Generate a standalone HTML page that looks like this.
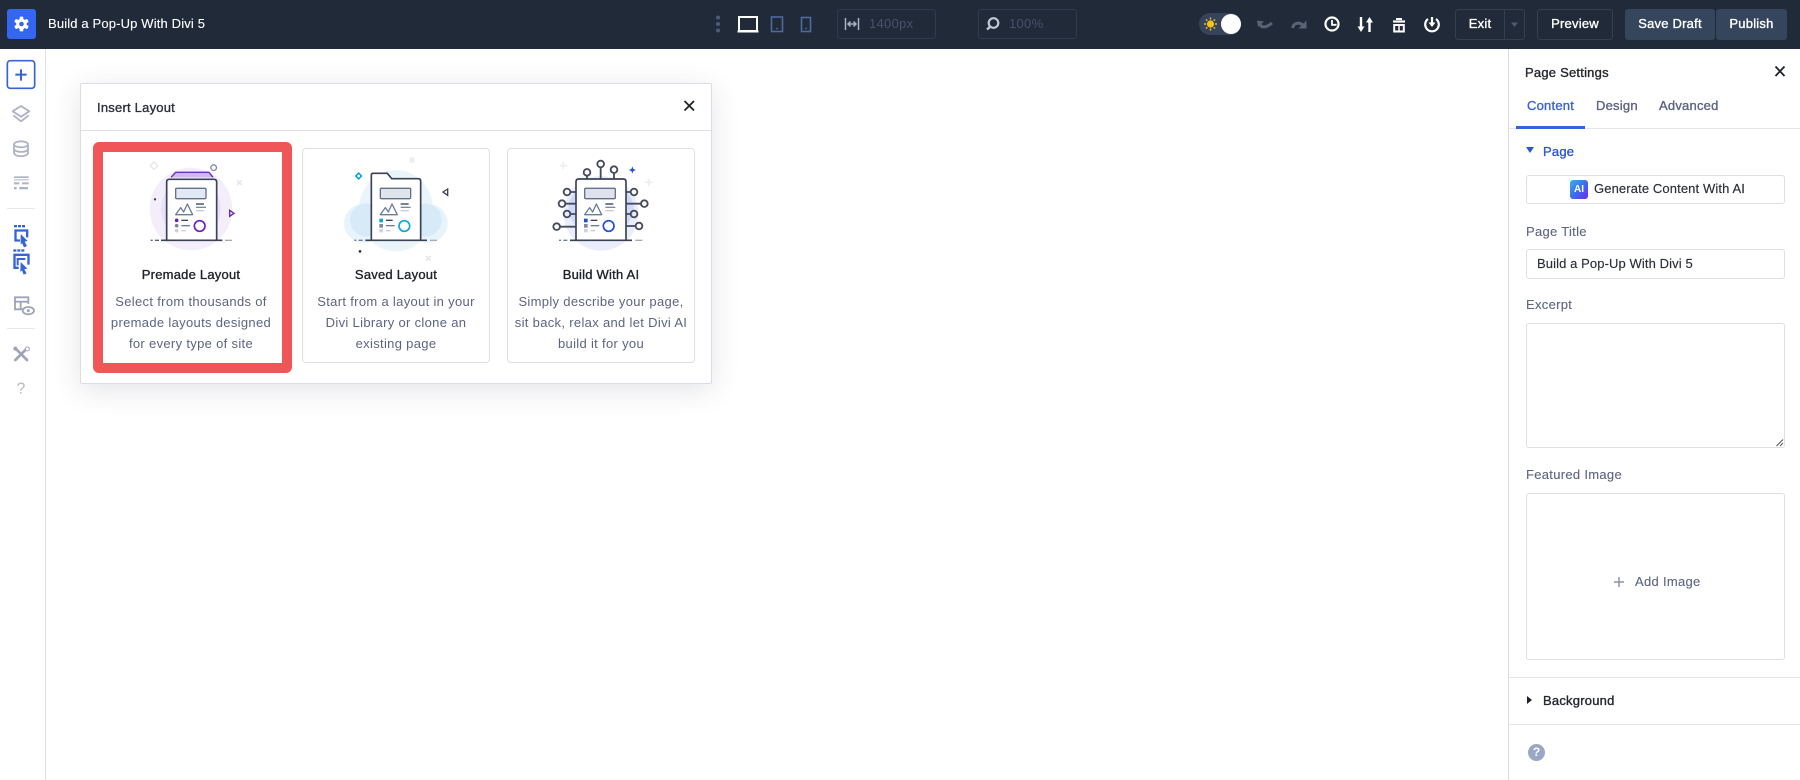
<!DOCTYPE html>
<html><head><meta charset="utf-8"><style>
*{box-sizing:border-box}
html,body{margin:0;padding:0;width:1800px;height:780px;overflow:hidden;background:#fff;font-family:"Liberation Sans",sans-serif}
.a{position:absolute}
.t{position:absolute;white-space:nowrap;line-height:20px;font-size:13px}
.c{transform:translateX(-50%);text-align:center}
svg{position:absolute;overflow:visible}
.m{-webkit-text-stroke:.35px currentColor;font-size:13px;letter-spacing:.22px}
.d{color:#5b6582;font-size:13px;letter-spacing:.32px}
.h{color:#20242c}
.box{position:absolute;border:1px solid #dcdfe4;border-radius:3px;background:#fff}
.l{color:#5b6582;font-size:13px;letter-spacing:.3px;-webkit-text-stroke:.12px currentColor}
.card{position:absolute;border:1.5px solid #dcdfe4;border-radius:4px;background:#fff}
</style></head><body>

<!-- top bar -->
<div class="a" style="left:0;top:0;width:1800px;height:49px;background:#212a38"></div>
<div class="a" style="left:7px;top:9px;width:29px;height:30px;background:#3566f1;border-radius:3px"></div>
<svg style="left:0;top:0" width="1800" height="49" viewBox="0 0 1800 49">
  <g transform="translate(21.5 24)" fill="#fff">
    <circle r="5.3"/><rect x="-1.8" y="-7.4" width="3.6" height="14.8" rx=".8"/>
    <rect x="-1.8" y="-7.4" width="3.6" height="14.8" rx=".8" transform="rotate(60)"/>
    <rect x="-1.8" y="-7.4" width="3.6" height="14.8" rx=".8" transform="rotate(120)"/>
    <circle r="2.3" fill="#3566f1"/>
  </g>
  <g fill="#4a5a80"><circle cx="718" cy="17.5" r="2"/><circle cx="718" cy="24" r="2"/><circle cx="718" cy="30.5" r="2"/></g>
  <rect x="739" y="17" width="18" height="14" fill="none" stroke="#fff" stroke-width="2"/><path d="M737.5 31.5H758.5" stroke="#fff" stroke-width="2"/>
  <rect x="771.5" y="17" width="11" height="14.5" fill="none" stroke="#4f6a9c" stroke-width="1.6"/><circle cx="777" cy="28.5" r=".9" fill="#4f6a9c"/>
  <rect x="801.5" y="17.5" width="9" height="14" fill="none" stroke="#4f6a9c" stroke-width="1.6"/><circle cx="806" cy="28.5" r=".9" fill="#4f6a9c"/>
  <rect x="837.5" y="9.5" width="98" height="29" rx="3" fill="none" stroke="#303b4e"/>
  <rect x="978.5" y="9.5" width="98" height="29" rx="3" fill="none" stroke="#303b4e"/>
  <path d="M845.5 18V30M858.5 18V30M848 24H856M850.5 21.5L848 24L850.5 26.5M853.5 21.5L856 24L853.5 26.5" fill="none" stroke="#aab3c6" stroke-width="1.5"/>
  <circle cx="993.5" cy="23" r="4.8" fill="none" stroke="#c2c9d6" stroke-width="2.2"/><path d="M989.8 27L987 29.5" stroke="#c2c9d6" stroke-width="2.4"/>
  <rect x="1199" y="13" width="42" height="22" rx="11" fill="#37435a"/>
  <circle cx="1231" cy="24" r="10" fill="#fff"/>
  <circle cx="1210.5" cy="24" r="3.6" fill="#f5c518"/>
  <g stroke="#f5c518" stroke-width="1.4"><path d="M1210.5 17.5V19.5M1210.5 28.5V30.5M1204 24H1206M1215 24H1217M1206 19.5L1207.3 20.8M1213.7 27.2L1215 28.5M1206 28.5L1207.3 27.2M1213.7 20.8L1215 19.5"/></g>
  <!-- undo / redo -->
  <path d="M1260 24C1261 28 1266 28 1272 23" fill="none" stroke="#596374" stroke-width="3"/><path d="M1257 20.5L1264 21.5L1258 27Z" fill="#596374"/>
  <path d="M1292.5 28C1294 22.5 1299 22 1303 25" fill="none" stroke="#596374" stroke-width="3"/><path d="M1306.5 20.5V28.5H1298.5Z" fill="#596374"/>
  <!-- clock -->
  <circle cx="1332" cy="24" r="6.5" fill="none" stroke="#fff" stroke-width="2.2"/><path d="M1332 20V24.8H1336.5" fill="none" stroke="#fff" stroke-width="1.8"/>
  <!-- sort -->
  <path d="M1361 17V28" stroke="#fff" stroke-width="2.4"/><path d="M1357.5 26.5H1364.5L1361 32Z" fill="#fff"/>
  <path d="M1369.5 22V32" stroke="#fff" stroke-width="2.4"/><path d="M1366 22.5H1373L1369.5 17Z" fill="#fff"/>
  <!-- trash -->
  <path d="M1393 21.5H1405" stroke="#fff" stroke-width="2.2"/><path d="M1396 19H1402" stroke="#fff" stroke-width="2"/><rect x="1394.2" y="25" width="9.6" height="6.5" fill="none" stroke="#fff" stroke-width="2"/><path d="M1399 25V31" stroke="#fff" stroke-width="1.5"/>
  <!-- power -->
  <path d="M1428 19A6.8 6.8 0 1 0 1436 19" fill="none" stroke="#fff" stroke-width="2.2"/><path d="M1432 17V23" stroke="#fff" stroke-width="2.2"/><path d="M1428.5 22.5H1435.5L1432 27Z" fill="#fff"/>
  <rect x="1455.5" y="9.5" width="69" height="30" rx="3" fill="none" stroke="#353f50"/><path d="M1504.5 9.5V39.5" stroke="#353f50"/>
  <path d="M1511 22.5H1518L1514.5 27Z" fill="#4e5a70"/>
  <rect x="1537.5" y="9.5" width="75" height="30" rx="3" fill="none" stroke="#353f50"/>
  <rect x="1625" y="9" width="90" height="31" rx="3" fill="#35465c"/>
  <rect x="1716" y="9" width="71" height="31" rx="3" fill="#35465c"/>
</svg>
<div class="t" style="left:48px;top:14px;color:#fff;font-size:13px;letter-spacing:.15px;-webkit-text-stroke:.12px #fff">Build a Pop-Up With Divi 5</div>
<div class="t" style="left:869px;top:14px;color:#46516f;font-size:13px;letter-spacing:.3px">1400px</div>
<div class="t" style="left:1009px;top:14px;color:#46516f;font-size:13px;letter-spacing:.3px">100%</div>
<div class="t c m" style="left:1480px;top:14px;color:#fff">Exit</div>
<div class="t c m" style="left:1575px;top:14px;color:#fff">Preview</div>
<div class="t c m" style="left:1670px;top:14px;color:#fff">Save Draft</div>
<div class="t c m" style="left:1751.5px;top:14px;color:#fff">Publish</div>

<!-- left sidebar -->
<div class="a" style="left:45px;top:49px;width:1px;height:731px;background:#dfe2e8"></div>
<svg style="left:0;top:50px" width="50" height="360" viewBox="0 0 150 1080">
  <rect x="22" y="32" width="82" height="83" rx="9" fill="#fff" stroke="#3563d9" stroke-width="5"/>
  <path d="M63 58V92M46 74H80" stroke="#3563d9" stroke-width="6"/>
  <g fill="none" stroke="#aeb4c7" stroke-width="5.5" stroke-linejoin="round">
    <path d="M63 168L88 184L63 200L38 184Z"/><path d="M40 196L63 214L86 196"/>
    <ellipse cx="63" cy="283" rx="21" ry="9"/><path d="M42 283V308C42 322 84 322 84 308V283M42 296C42 309 84 309 84 296"/>
  </g>
  <g fill="#aeb4c7"><rect x="42" y="379" width="44" height="5"/><rect x="42" y="388" width="44" height="3"/><rect x="42" y="397" width="16" height="6"/><rect x="66" y="397" width="20" height="6"/><rect x="42" y="411" width="8" height="7"/><rect x="58" y="411" width="26" height="7"/></g>
  <rect x="20" y="474" width="84" height="2" fill="#dcdfe5"/>
  <g fill="#3563d9">
    <rect x="42" y="525" width="9" height="7"/><rect x="54" y="525" width="9" height="7"/><rect x="66" y="525" width="9" height="7"/>
    <path d="M43 538H85V562H78V545H50V568H60V575H43Z"/><path d="M62 552L83 573L74 575L81 588L72 592L66 579L62 584Z"/>
    <rect x="40" y="598" width="9" height="7"/><rect x="52" y="598" width="9" height="7"/><rect x="64" y="598" width="9" height="7"/>
    <path d="M40 611H89V644H82V618H47V650H56V657H40Z"/><path d="M50 624H76V630H56V646H50Z"/><path d="M62 636L82 656L73 658L80 670L71 674L66 661L61 666Z"/>
  </g>
  <g fill="none" stroke="#9ea5b8" stroke-width="5.5">
    <path d="M70 778H45V742H85V762M45 755H85M62 755V778"/>
    <ellipse cx="85" cy="782" rx="17" ry="11"/>
  </g><circle cx="85" cy="782" r="4.5" fill="#9ea5b8"/>
  <rect x="20" y="834" width="84" height="2" fill="#dcdfe5"/>
  <g stroke="#9ea5b8" stroke-width="8" stroke-linecap="round" fill="none"><path d="M46 895L81 930"/><path d="M80 896L46 930"/></g>
  <circle cx="46" cy="896" r="6" fill="#9ea5b8"/><circle cx="82" cy="897" r="6" fill="#fff" stroke="#9ea5b8" stroke-width="3"/>
  <text x="63" y="1031" text-anchor="middle" font-size="46" fill="#b3b8c6" font-family="Liberation Sans">?</text>
</svg>

<!-- modal -->
<div class="a" style="left:80px;top:83px;width:632px;height:301px;background:#fff;border:1px solid #dadde3;border-radius:2px;box-shadow:0 6px 28px rgba(40,50,70,.13)"></div>
<div class="a" style="left:81px;top:130px;width:630px;height:1px;background:#dfe2e7"></div>
<div class="t m" style="left:97px;top:98px;color:#2a2e38">Insert Layout</div>
<svg style="left:0;top:0" width="720" height="130" viewBox="0 0 720 130"><path d="M684.5 101L694 110.5M694 101L684.5 110.5" stroke="#1e222a" stroke-width="1.8"/></svg>

<!-- card 1 -->
<div class="a" style="left:93px;top:142px;width:199px;height:231px;background:#fff;border:10px solid #f05558;border-radius:6px"></div>
<svg style="left:85px;top:130px" width="220" height="250" viewBox="0 0 660 750">
  <circle cx="318" cy="237" r="124" fill="#f4eefb"/><circle cx="318" cy="237" r="90" fill="#e9e1f8"/>
  <path d="M258 142L272 127H372L384 142" fill="#cdb9ef" stroke="#6a2fbd" stroke-width="4"/>
  <path d="M245 330V156Q245 148 253 148H387Q395 148 395 156V330" fill="#fff" stroke="#3b4256" stroke-width="5"/>
  <rect x="272" y="175" width="91" height="31" rx="3" fill="#e1e9f5" stroke="#64718c" stroke-width="4"/>
  <path d="M272 254L287 233L296 246L307 222L323 254Z" fill="none" stroke="#6b7d99" stroke-width="4" stroke-linejoin="round"/>
  <path d="M333 222H357" stroke="#3b4256" stroke-width="4"/><path d="M333 232H363" stroke="#7a8aa5" stroke-width="4"/><path d="M333 242H358" stroke="#c5ccd8" stroke-width="4"/>
  <circle cx="275" cy="271" r="5.5" fill="#6a24b8"/><circle cx="275" cy="287" r="5.5" fill="#7f7f9e"/><circle cx="275" cy="302" r="5.5" fill="#cfcfd8"/>
  <path d="M289 271H309" stroke="#3b4256" stroke-width="4"/><path d="M289 287H315" stroke="#6b7d99" stroke-width="4"/><path d="M289 302H302" stroke="#c5ccd8" stroke-width="4"/>
  <circle cx="344" cy="288" r="16" fill="#fff" stroke="#6a24b8" stroke-width="5"/>
  <path d="M228 331H412" stroke="#3b4256" stroke-width="5"/><path d="M197 331H203M210 331H222" stroke="#5a6278" stroke-width="4"/><path d="M420 331H441" stroke="#a3a9b5" stroke-width="4"/>
  <path d="M207 96L218 107L207 118L196 107Z" fill="none" stroke="#e6e7ee" stroke-width="4"/>
  <circle cx="386" cy="113" r="8.5" fill="none" stroke="#7d8cab" stroke-width="4"/>
  <path d="M456 151L470 165M470 151L456 165" stroke="#e6e7ee" stroke-width="5"/>
  <circle cx="210" cy="208" r="3.5" fill="#3b4256"/>
  <path d="M434 241L447 250L434 259Z" fill="none" stroke="#6a24b8" stroke-width="4"/>
</svg>
<div class="t c h m" style="left:191px;top:265px">Premade Layout</div>
<div class="t c d" style="left:191px;top:292px">Select from thousands of</div>
<div class="t c d" style="left:191px;top:313px">premade layouts designed</div>
<div class="t c d" style="left:191px;top:334px">for every type of site</div>

<!-- card 2 -->
<div class="card" style="left:302px;top:148px;width:188px;height:215px"></div>
<svg style="left:300px;top:140px" width="200" height="240" viewBox="0 0 600 720">
  <ellipse cx="288" cy="212" rx="112" ry="122" fill="#eaf5fb"/><circle cx="190" cy="250" r="58" fill="#e8f4fb"/><circle cx="385" cy="250" r="58" fill="#e8f4fb"/>
  <ellipse cx="200" cy="240" rx="50" ry="50" fill="#d6eaf7"/><ellipse cx="375" cy="240" rx="50" ry="50" fill="#d6eaf7"/>
  <path d="M214 300V105Q214 100 220 100H262L275 116H355Q362 116 362 123V300" fill="#fff" stroke="#3b4256" stroke-width="5"/>
  <rect x="241" y="145" width="91" height="31" rx="3" fill="#dfe4ec" stroke="#64718c" stroke-width="4"/>
  <path d="M241 224L256 203L265 216L276 192L292 224Z" fill="none" stroke="#6b7d99" stroke-width="4" stroke-linejoin="round"/>
  <path d="M302 192H326" stroke="#3b4256" stroke-width="4"/><path d="M302 202H332" stroke="#7a8aa5" stroke-width="4"/><path d="M302 212H327" stroke="#c5ccd8" stroke-width="4"/>
  <rect x="238" y="236" width="11" height="11" fill="#12a5d8"/><rect x="238" y="252" width="11" height="11" fill="#7f8aa0"/><rect x="238" y="267" width="11" height="10" fill="#cfd3db"/>
  <path d="M258 241H278" stroke="#3b4256" stroke-width="4"/><path d="M258 257H284" stroke="#6b7d99" stroke-width="4"/><path d="M258 272H271" stroke="#c5ccd8" stroke-width="4"/>
  <circle cx="313" cy="258" r="16" fill="#fff" stroke="#12a5d8" stroke-width="5"/>
  <path d="M196 301H381" stroke="#3b4256" stroke-width="5"/><path d="M163 301H169M176 301H188" stroke="#6b7d99" stroke-width="4"/><path d="M390 301H411" stroke="#a3a9b5" stroke-width="4"/>
  <path d="M176 96L188 108L176 120L164 108Z" fill="#12a5d8"/><circle cx="176" cy="108" r="4" fill="#fff"/>
  <circle cx="336" cy="60" r="9" fill="#eceef2"/>
  <path d="M443 147L429 156L443 166Z" fill="none" stroke="#3b4256" stroke-width="4"/>
  <circle cx="180" cy="334" r="4" fill="#2b3040"/>
  <path d="M378 348L392 362M392 348L378 362" stroke="#e6e7ee" stroke-width="5"/>
</svg>
<div class="t c h m" style="left:396px;top:265px">Saved Layout</div>
<div class="t c d" style="left:396px;top:292px">Start from a layout in your</div>
<div class="t c d" style="left:396px;top:313px">Divi Library or clone an</div>
<div class="t c d" style="left:396px;top:334px">existing page</div>

<!-- card 3 -->
<div class="card" style="left:507px;top:148px;width:188px;height:215px"></div>
<svg style="left:500px;top:140px" width="220" height="240" viewBox="0 0 660 720">
  <circle cx="303" cy="220" r="112" fill="#eaeefc"/><ellipse cx="303" cy="205" rx="98" ry="80" fill="#d0daf9"/>
  <g fill="none" stroke="#454b5c" stroke-width="5.5">
    <path d="M228 156H211M228 191H196M228 222H211M228 260H180M378 156H392M378 191H423M378 222H392M378 258H407M261 116V107M302 116V82M342 116V99"/>
    <circle cx="201" cy="156" r="10"/><circle cx="186" cy="191" r="10"/><circle cx="201" cy="222" r="10"/><circle cx="170" cy="260" r="10"/>
    <circle cx="402" cy="156" r="10"/><circle cx="433" cy="191" r="10"/><circle cx="402" cy="222" r="10"/><circle cx="417" cy="258" r="10"/>
    <circle cx="261" cy="97" r="10"/><circle cx="302" cy="72" r="10"/><circle cx="342" cy="89" r="10"/>
  </g>
  <path d="M228 300V125Q228 117 236 117H370Q378 117 378 125V300" fill="#fff" stroke="#3b4256" stroke-width="5"/>
  <rect x="254" y="145" width="92" height="31" rx="3" fill="#dfe2ec" stroke="#64718c" stroke-width="4"/>
  <path d="M254 224L269 203L278 216L289 192L305 224Z" fill="none" stroke="#6b7d99" stroke-width="4" stroke-linejoin="round"/>
  <path d="M316 192H340" stroke="#3b4256" stroke-width="4"/><path d="M316 202H346" stroke="#7a8aa5" stroke-width="4"/><path d="M316 212H341" stroke="#c5ccd8" stroke-width="4"/>
  <rect x="252" y="236" width="11" height="11" fill="#1e4fd8"/><rect x="252" y="252" width="11" height="11" fill="#7f8aa0"/><rect x="252" y="267" width="11" height="10" fill="#cfd3db"/>
  <path d="M272 241H292" stroke="#3b4256" stroke-width="4"/><path d="M272 257H298" stroke="#6b7d99" stroke-width="4"/><path d="M272 272H285" stroke="#c5ccd8" stroke-width="4"/>
  <circle cx="326" cy="258" r="16" fill="#fff" stroke="#1e4fd8" stroke-width="5"/>
  <path d="M210 301H396" stroke="#3b4256" stroke-width="5"/><path d="M177 301H183M190 301H202" stroke="#6b7d99" stroke-width="4"/><path d="M406 301H427" stroke="#a3a9b5" stroke-width="4"/>
  <path d="M397 79L400 87L408 90L400 93L397 101L394 93L386 90L394 87Z" fill="#1e4fd8"/>
  <path d="M190 66V88M179 77H201M446 116V138M435 127H457" stroke="#eceef2" stroke-width="5"/>
</svg>
<div class="t c h m" style="left:601px;top:265px">Build With AI</div>
<div class="t c d" style="left:601px;top:292px">Simply describe your page,</div>
<div class="t c d" style="left:601px;top:313px">sit back, relax and let Divi AI</div>
<div class="t c d" style="left:601px;top:334px">build it for you</div>

<!-- right panel -->
<div class="a" style="left:1508px;top:49px;width:292px;height:731px;background:#fff;border-left:1px solid #dadde3"></div>
<div class="t m" style="left:1525px;top:63px;color:#23272f">Page Settings</div>
<svg style="left:1770px;top:60px" width="20" height="20" viewBox="0 0 20 20"><path d="M5.5 6.5L14.5 16M14.5 6.5L5.5 16" stroke="#1e222a" stroke-width="1.8"/></svg>
<div class="t m" style="left:1527px;top:96px;color:#3a62d6">Content</div>
<div class="t m" style="left:1596px;top:96px;color:#5b6582">Design</div>
<div class="t m" style="left:1659px;top:96px;color:#5b6582">Advanced</div>
<div class="a" style="left:1509px;top:128px;width:291px;height:1px;background:#e2e4e9"></div>
<div class="a" style="left:1516px;top:126px;width:69px;height:2.5px;background:#3563e0"></div>

<svg style="left:1526px;top:145px" width="9" height="10" viewBox="0 0 9 10"><path d="M0 2H8L4 8Z" fill="#2b55d9"/></svg>
<div class="t m" style="left:1543px;top:142px;color:#2b55d9">Page</div>

<div class="box" style="left:1526px;top:175px;width:259px;height:29px"></div>
<div class="a" style="left:1570px;top:180px;width:18px;height:19px;border-radius:3px;background:linear-gradient(135deg,#3bb2ee 0%,#3b6cf0 50%,#6a2cf0 100%)"></div>
<div class="t" style="left:1570px;top:180px;width:18px;height:19px;line-height:19px;text-align:center;font-size:10px;font-weight:bold;color:#fff">AI</div>
<div class="t" style="left:1594px;top:179px;color:#2a2e38;font-size:13px;letter-spacing:.12px;-webkit-text-stroke:.15px #2a2e38">Generate Content With AI</div>

<div class="t l" style="left:1526px;top:222px">Page Title</div>
<div class="box" style="left:1526px;top:249px;width:259px;height:30px"></div>
<div class="t" style="left:1537px;top:254px;color:#2a2e38;font-size:13px;letter-spacing:.1px;-webkit-text-stroke:.15px #2a2e38">Build a Pop-Up With Divi 5</div>

<div class="t l" style="left:1526px;top:295px">Excerpt</div>
<div class="box" style="left:1526px;top:323px;width:259px;height:125px"></div>
<svg style="left:1775px;top:438px" width="9" height="9" viewBox="0 0 9 9"><path d="M1.5 8L8 1.5M5 8L8 5" stroke="#555" stroke-width="1"/></svg>

<div class="t l" style="left:1526px;top:465px">Featured Image</div>
<div class="box" style="left:1526px;top:493px;width:259px;height:167px"></div>
<svg style="left:1613px;top:576px" width="12" height="12" viewBox="0 0 12 12"><path d="M6 1V11M1 6H11" stroke="#8d94a8" stroke-width="1.5"/></svg>
<div class="t l" style="left:1635px;top:572px">Add Image</div>

<div class="a" style="left:1509px;top:677px;width:291px;height:1px;background:#e2e4e9"></div>
<svg style="left:1526px;top:695px" width="8" height="10" viewBox="0 0 8 10"><path d="M1 1L6 5L1 9Z" fill="#1e222a"/></svg>
<div class="t m" style="left:1543px;top:691px;color:#23272f">Background</div>
<div class="a" style="left:1509px;top:724px;width:291px;height:1px;background:#e2e4e9"></div>
<div class="a" style="left:1528px;top:744px;width:17px;height:17px;border-radius:50%;background:#9aa8c6"></div>
<div class="t" style="left:1528px;top:744px;width:17px;height:17px;line-height:17px;text-align:center;color:#fff;font-weight:bold;font-size:12px">?</div>
</body></html>
